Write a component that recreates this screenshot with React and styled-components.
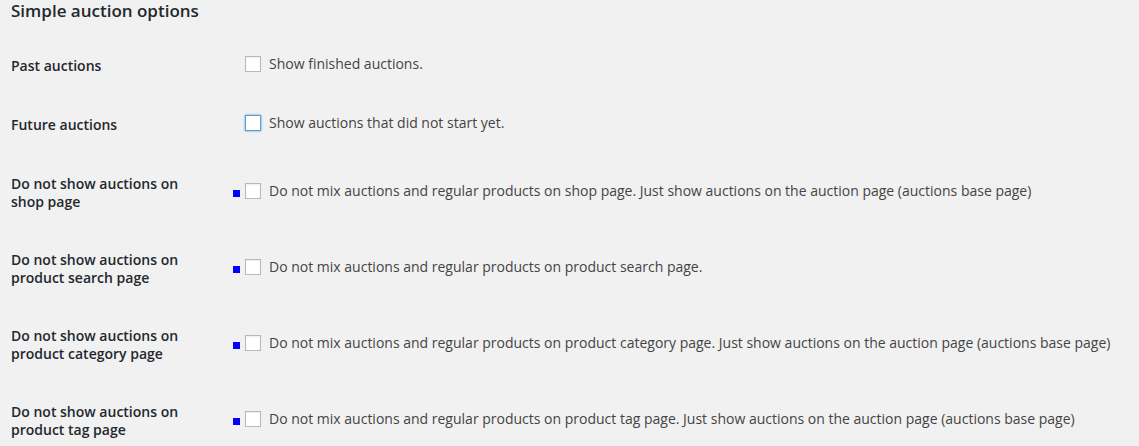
import styled, { createGlobalStyle } from "styled-components";

const GlobalStyle = createGlobalStyle`
  html, body {
    margin: 0;
    padding: 0;
    background: #f1f1f1;
  }
  body {
    font-family: "Open Sans", "Liberation Sans", sans-serif;
    font-size: 14px;
    color: #444;
  }
`;

const options = [
  { label: "Past auctions", text: "Show finished auctions." },
  { label: "Future auctions", text: "Show auctions that did not start yet.", focused: true },
  {
    label: "Do not show auctions on shop page",
    text: "Do not mix auctions and regular products on shop page. Just show auctions on the auction page (auctions base page)",
    marker: true,
  },
  {
    label: "Do not show auctions on product search page",
    text: "Do not mix auctions and regular products on product search page.",
    marker: true,
  },
  {
    label: "Do not show auctions on product category page",
    text: "Do not mix auctions and regular products on product category page. Just show auctions on the auction page (auctions base page)",
    marker: true,
  },
  {
    label: "Do not show auctions on product tag page",
    text: "Do not mix auctions and regular products on product tag page. Just show auctions on the auction page (auctions base page)",
    marker: true,
  },
];

export default function App() {
  return (
    <Page>
      <GlobalStyle />
      <Heading>Simple auction options</Heading>
      <Form>
        {options.map((o) => (
          <Row key={o.label}>
            <Label>{o.label}</Label>
            <Field>
              <BoxWrap>
                {o.marker && <Marker />}
                <Checkbox $focused={o.focused} />
              </BoxWrap>
              <Description>{o.text}</Description>
            </Field>
          </Row>
        ))}
      </Form>
    </Page>
  );
}

const Page = styled.div`
  padding: 0 11px;
`;

const Heading = styled.h2`
  margin: 0 0 14px;
  font-size: 17px;
  line-height: 22px;
  font-weight: 600;
  color: #23282d;
`;

const Form = styled.div`
  display: flex;
  flex-direction: column;
`;

const Row = styled.div`
  display: grid;
  grid-template-columns: 234px 1fr;
  align-items: center;
  min-height: 59.5px;
`;

const Label = styled.div`
  padding: 20px 0;
  width: 190px;
  font-weight: 600;
  line-height: 18px;
  color: #23282d;
`;

const Field = styled.label`
  display: flex;
  align-items: center;
  gap: 8px;
  margin-bottom: 4px;
  line-height: 20px;
`;

const BoxWrap = styled.span`
  position: relative;
  display: inline-flex;
`;

const Marker = styled.span`
  position: absolute;
  left: -12px;
  bottom: 2px;
  width: 7px;
  height: 7px;
  background: #0000ff;
`;

const Checkbox = styled.span`
  display: inline-block;
  box-sizing: border-box;
  width: 16px;
  height: 16px;
  background: #fff;
  border: 1px solid ${(p) => (p.$focused ? "#5b9dd9" : "#b4b9be")};
  box-shadow: ${(p) =>
    p.$focused
      ? "0 0 2px rgba(30, 140, 190, 0.8)"
      : "inset 0 1px 2px rgba(0, 0, 0, 0.07)"};
`;

const Description = styled.span`
  color: #444;
`;
